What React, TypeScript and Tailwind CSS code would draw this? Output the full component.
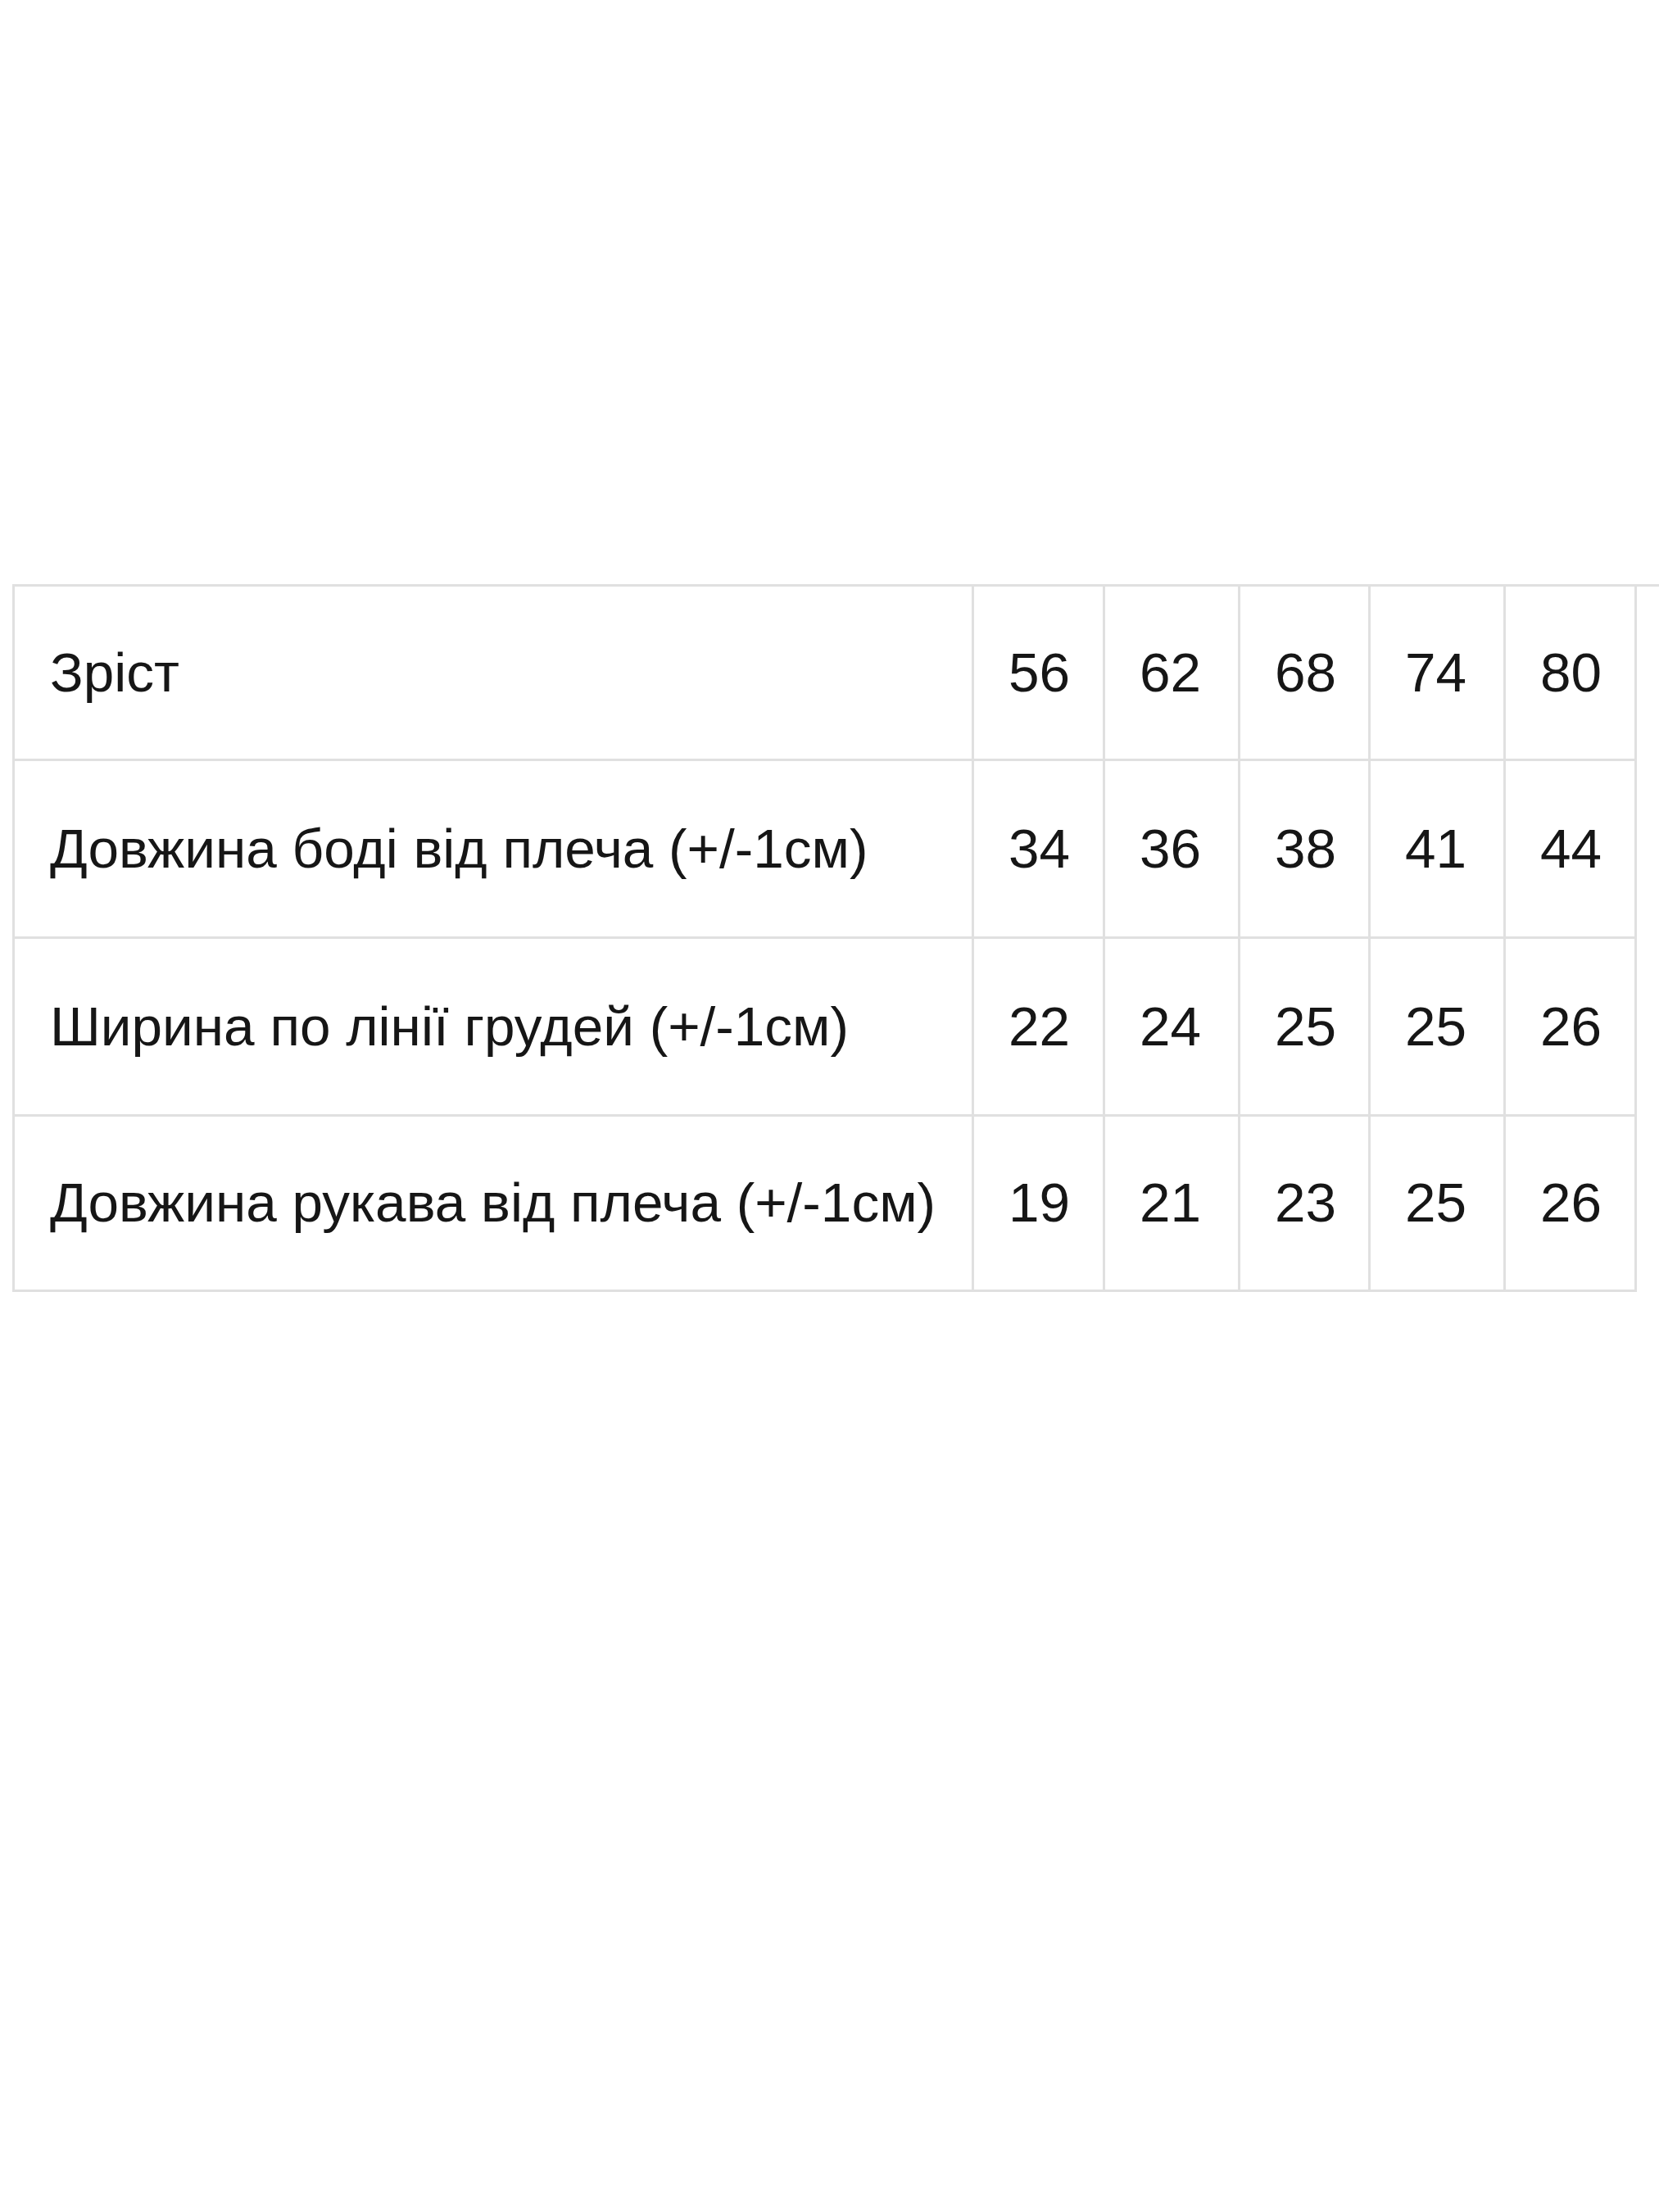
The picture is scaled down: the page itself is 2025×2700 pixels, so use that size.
const rows: { label: string; values: string[]; h: string }[] = [
  { label: "Зріст", values: ["56", "62", "68", "74", "80"], h: "h-[211px]" },
  { label: "Довжина боді від плеча (+/-1см)", values: ["34", "36", "38", "41", "44"], h: "h-[217px]" },
  { label: "Ширина по лінії грудей (+/-1см)", values: ["22", "24", "25", "25", "26"], h: "h-[217px]" },
  { label: "Довжина рукава від плеча (+/-1см)", values: ["19", "21", "23", "25", "26"], h: "h-[214px]" },
];

const colWidths = ["w-[160px]", "w-[165px]", "w-[159px]", "w-[165px]", "w-[160px]"];

export default function App() {
  return (
    <div className="min-h-[2700px] w-[2025px] bg-white pl-[15px] pt-[713px] font-['Liberation_Sans',Arial,sans-serif] text-[67.5px] leading-none text-[#161616]">
      <div className="border-t-[3px] border-[#e0e0e0]">
        <table className="table-fixed border-collapse">
          <colgroup>
            <col className="w-[1171px]" />
            {colWidths.map((w, i) => (
              <col key={i} className={w} />
            ))}
          </colgroup>
          <tbody>
            {rows.map((row, ri) => (
              <tr key={row.label} className={row.h}>
                <td
                  className={`border-[3px] border-[#e0e0e0] pl-[43px] pr-0 text-left align-middle ${ri === 0 ? "border-t-0" : ""}`}
                >
                  {row.label}
                </td>
                {row.values.map((v, ci) => (
                  <td
                    key={ci}
                    className={`border-[3px] border-[#e0e0e0] pl-[42px] pr-0 text-left align-middle ${ri === 0 ? "border-t-0" : ""}`}
                  >
                    {v}
                  </td>
                ))}
              </tr>
            ))}
          </tbody>
        </table>
      </div>
    </div>
  );
}
